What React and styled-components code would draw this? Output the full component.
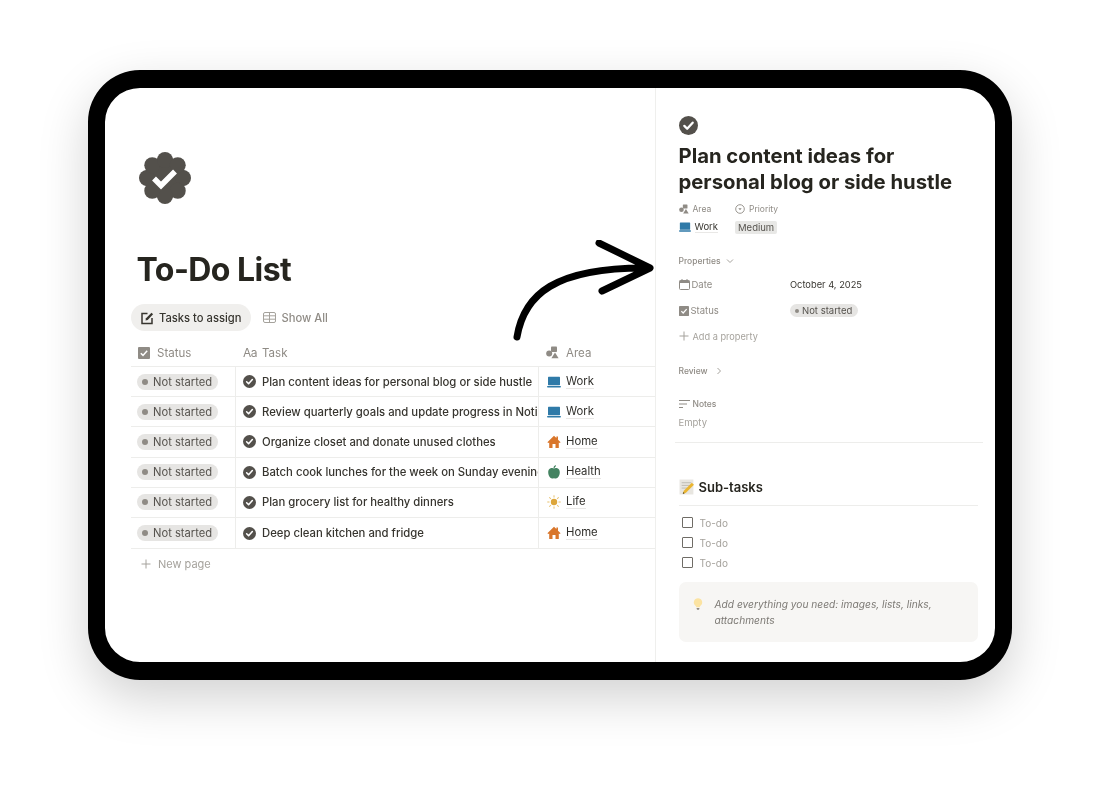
import React from 'react';
import styled, { createGlobalStyle } from 'styled-components';

const GlobalStyle = createGlobalStyle`
  html, body { margin: 0; padding: 0; background: #fff; }
  body { font-family: Inter, "Liberation Sans", sans-serif; color: #37352f; }
  * { box-sizing: border-box; }
`;

const tasks = [
  { name: 'Plan content ideas for personal blog or side hustle', area: 'Work', icon: 'laptop' },
  { name: 'Review quarterly goals and update progress in Notion', area: 'Work', icon: 'laptop' },
  { name: 'Organize closet and donate unused clothes', area: 'Home', icon: 'house' },
  { name: 'Batch cook lunches for the week on Sunday evening', area: 'Health', icon: 'apple' },
  { name: 'Plan grocery list for healthy dinners', area: 'Life', icon: 'sun' },
  { name: 'Deep clean kitchen and fridge', area: 'Home', icon: 'house' },
];

function CheckCircle({ size = 13 }) {
  return (
    <svg width={size} height={size} viewBox="0 0 20 20" style={{ flexShrink: 0 }}>
      <circle cx="10" cy="10" r="10" fill="#53504b" />
      <path d="M5.6 10.4l3 3 5.8-6.4" fill="none" stroke="#fff" strokeWidth="2.4" strokeLinecap="round" strokeLinejoin="round" />
    </svg>
  );
}

function Badge() {
  const petals = [0, 45, 90, 135, 180, 225, 270, 315];
  return (
    <svg width="52" height="52" viewBox="0 0 52 52">
      <circle cx="26" cy="26" r="21" fill="#53504b" />
      {petals.map((a) => (
        <circle
          key={a}
          cx={26 + 18 * Math.cos((a * Math.PI) / 180)}
          cy={26 + 18 * Math.sin((a * Math.PI) / 180)}
          r="8"
          fill="#53504b"
        />
      ))}
      <path d="M15 26.500l7 7L36 19.500" fill="none" stroke="#fff" strokeWidth="5.500" strokeLinejoin="miter" />
    </svg>
  );
}

function Laptop({ size = 14 }) {
  return (
    <svg width={size} height={size} viewBox="0 0 14 14">
      <rect x="1" y="1.800" width="12" height="8.400" rx="0.600" fill="#2f7aa8" />
      <rect x="0" y="10.900" width="14" height="1.700" rx="0.800" fill="#2f7aa8" />
    </svg>
  );
}

function House() {
  return (
    <svg width="14" height="14" viewBox="0 0 14 14">
      <path d="M7 .8L.4 7.200l.9.9L2.200 7.400V13h3.300V9h3v4h3.300V7.400l.9.7.9-.9L11 4.700V1.500H9.400v1.600z" fill="#d9762b" />
    </svg>
  );
}

function Apple() {
  return (
    <svg width="14" height="14" viewBox="0 0 14 14">
      <path d="M7 3.400C5.400 2.400 1.200 2.600 1.200 7.300c0 3.400 2.200 6.200 3.800 6.200.8 0 1.200-.3 2-.3s1.200.3 2 .3c1.600 0 3.800-2.800 3.800-6.200C12.800 2.600 8.600 2.400 7 3.400z" fill="#448361" />
      <path d="M7 3.200C7 2 7.600 1 8.800.6" fill="none" stroke="#448361" strokeWidth="1.200" />
    </svg>
  );
}

function Sun() {
  const rays = [0, 45, 90, 135, 180, 225, 270, 315];
  return (
    <svg width="14" height="14" viewBox="0 0 14 14">
      <circle cx="7" cy="7" r="3.200" fill="#dda63b" />
      {rays.map((a) => (
        <line key={a} x1="7" y1="2.500" x2="7" y2="0.300" stroke="#e8c06a" strokeWidth="1" transform={`rotate(${a} 7 7)`} />
      ))}
    </svg>
  );
}

const areaIcons = { laptop: Laptop, house: House, apple: Apple, sun: Sun };

function CheckSquare({ size = 12 }) {
  return (
    <svg width={size} height={size} viewBox="0 0 12 12" style={{ flexShrink: 0 }}>
      <rect width="12" height="12" rx="1" fill="#8f8b85" />
      <path d="M2.800 6.200l2.200 2.200 4.200-4.600" fill="none" stroke="#fff" strokeWidth="1.500" />
    </svg>
  );
}

function Shapes({ size = 13 }) {
  return (
    <svg width={size} height={size} viewBox="0 0 13 13" style={{ flexShrink: 0 }}>
      <rect x="5" y="0.500" width="6" height="5.500" rx="0.800" fill="#8f8b85" />
      <circle cx="3.200" cy="7.500" r="3" fill="#8f8b85" />
      <path d="M9 6.500l3.600 5.800H5.400z" fill="#8f8b85" />
    </svg>
  );
}

const Plus = () => (
  <svg width="10" height="10" viewBox="0 0 10 10" style={{ flexShrink: 0 }}>
    <path d="M5 .5v9M.5 5h9" stroke="#a5a29c" strokeWidth="1" />
  </svg>
);

function App() {
  return (
    <Page>
      <GlobalStyle />
      <Frame>
        <LeftPanel>
          <Badge />
          <Title>To-Do List</Title>
          <Tabs>
            <Tab $active>
              <svg width="13" height="14" viewBox="0 0 13 14">
                <path d="M6.500 2.500H1v10h10V7" fill="none" stroke="#37352f" strokeWidth="1.500" />
                <path d="M4.500 9.500l.5-2.300L10.500 1.700l1.600 1.600L6.700 8.900z" fill="#37352f" />
              </svg>
              Tasks to assign
            </Tab>
            <Tab>
              <svg width="13" height="11" viewBox="0 0 13 11">
                <rect x="0.500" y="0.500" width="12" height="10" rx="1.500" fill="none" stroke="#a5a29c" />
                <path d="M.5 3.800h12M.5 7.200h12M6.500 .5v10" stroke="#a5a29c" />
              </svg>
              Show All
            </Tab>
          </Tabs>
          <Table>
            <HeaderRow>
              <HeaderCell><CheckSquare />Status</HeaderCell>
              <HeaderCell $gap={5}><AaMark>Aa</AaMark>Task</HeaderCell>
              <HeaderCell><Shapes />Area</HeaderCell>
            </HeaderRow>
            {tasks.map((task) => {
              const AreaIcon = areaIcons[task.icon];
              return (
                <Row key={task.name}>
                  <StatusCell>
                    <Pill><Dot />Not started</Pill>
                  </StatusCell>
                  <TaskCell>
                    <CheckCircle />
                    <TaskName>{task.name}</TaskName>
                  </TaskCell>
                  <AreaCell>
                    <AreaIcon />
                    <AreaName>{task.area}</AreaName>
                  </AreaCell>
                </Row>
              );
            })}
          </Table>
          <NewPage><Plus />New page</NewPage>
        </LeftPanel>

        <RightPanel>
          <CheckCircle size={19} />
          <PageTitle>Plan content ideas for personal blog or side hustle</PageTitle>
          <Pinned>
            <PinnedCol>
              <PinnedLabel><Shapes size={10} />Area</PinnedLabel>
              <PinnedValue><Laptop size={12} /><AreaSmall>Work</AreaSmall></PinnedValue>
            </PinnedCol>
            <PinnedCol>
              <PinnedLabel>
                <svg width="10" height="10" viewBox="0 0 10 10">
                  <circle cx="5" cy="5" r="4.300" fill="none" stroke="#8f8b85" strokeWidth="0.900" />
                  <path d="M3.300 4.200h3.400L5 6.300z" fill="#8f8b85" />
                </svg>
                Priority
              </PinnedLabel>
              <PinnedValue><Tag>Medium</Tag></PinnedValue>
            </PinnedCol>
          </Pinned>

          <SectionHead>
            Properties
            <svg width="8" height="6" viewBox="0 0 8 6">
              <path d="M1 1.500l3 3 3-3" fill="none" stroke="#a5a29c" />
            </svg>
          </SectionHead>
          <PropRows>
            <PropRow>
              <PropLabel>
                <svg width="11" height="11" viewBox="0 0 11 11">
                  <rect x="0.500" y="1.500" width="10" height="9" rx="1" fill="none" stroke="#8f8b85" />
                  <rect x="0.500" y="1.500" width="10" height="2.500" fill="#8f8b85" />
                  <path d="M3 0v2M8 0v2" stroke="#8f8b85" />
                </svg>
                Date
              </PropLabel>
              <PropValue>October 4, 2025</PropValue>
            </PropRow>
            <PropRow>
              <PropLabel><CheckSquare size={10} />Status</PropLabel>
              <SmallPill><SmallDot />Not started</SmallPill>
            </PropRow>
          </PropRows>
          <AddProp><Plus />Add a property</AddProp>

          <ReviewHead>
            Review
            <svg width="6" height="8" viewBox="0 0 6 8">
              <path d="M1.500 1l3 3-3 3" fill="none" stroke="#a5a29c" />
            </svg>
          </ReviewHead>

          <NotesHead>
            <svg width="11" height="8" viewBox="0 0 11 8">
              <path d="M0 .5h11M0 4h8M0 7.500h4" stroke="#8f8b85" />
            </svg>
            Notes
          </NotesHead>
          <EmptyText>Empty</EmptyText>
          <Divider />

          <SubHead>
            <svg width="16" height="16" viewBox="0 0 15 15">
              <rect x="0.500" y="0.500" width="13" height="14" fill="#e8e6e0" />
              <path d="M2.500 3.500h9M2.500 6h9M2.500 8.500h5" stroke="#b9b5ac" strokeWidth="0.800" />
              <path d="M3.500 14l1-3 7.500-7.500 2 2L6.500 13z" fill="#eab530" />
              <path d="M3.500 14l.6-1.800 1.200 1.200z" fill="#5a4a2a" />
            </svg>
            Sub-tasks
          </SubHead>
          <Todos>
            {[0, 1, 2].map((i) => (
              <Todo key={i}><Box />To-do</Todo>
            ))}
          </Todos>
          <Callout>
            <svg width="10" height="14" viewBox="0 0 12 15" style={{ flexShrink: 0, marginTop: 1 }}>
              <path d="M6 .5a5 5 0 0 0-3 9c.6.5.8 1.200.9 1.800h4.200c.1-.6.3-1.300.9-1.800a5 5 0 0 0-3-9z" fill="#fbe3a2" />
              <path d="M4.200 12.300h3.600l-.6 2h-2.400z" fill="#8f8b85" />
            </svg>
            <CalloutText>Add everything you need: images, lists, links, attachments</CalloutText>
          </Callout>
        </RightPanel>

        <Arrow width="150" height="110" viewBox="0 0 150 110">
          <path
            d="M8 97C15 55 45 27 140 28M90 3L141 28 93 51"
            fill="none"
            stroke="#000"
            strokeWidth="7"
            strokeLinecap="round"
            strokeLinejoin="round"
          />
        </Arrow>
      </Frame>
    </Page>
  );
}

const Page = styled.div`
  width: 1100px;
  height: 786px;
  padding: 70px 88px 0;
  overflow: hidden;
`;

const Frame = styled.div`
  position: relative;
  width: 924px;
  height: 610px;
  display: flex;
  border: solid #000;
  border-width: 18px 17.5px;
  border-radius: 52px;
  background: #fff;
  overflow: hidden;
  box-shadow: 0 18px 50px rgba(0, 0, 0, 0.18);
`;

const Arrow = styled.svg`
  position: absolute;
  left: 403.5px;
  top: 152px;
  filter: blur(0.4px);
`;

const LeftPanel = styled.div`
  width: 551px;
  flex-shrink: 0;
  padding: 64px 0 0 26px;
  border-right: 1px solid #efefed;
  filter: blur(0.35px);
  & > svg { display: block; margin-left: 8px; }
`;

const Title = styled.h1`
  margin: 46px 0 0 5.5px;
  font-size: 32px;
  line-height: 40px;
  font-weight: 700;
  letter-spacing: -0.55px;
  color: #26251f;
`;

const Tabs = styled.div`
  display: flex;
  gap: 2px;
  margin-top: 14px;
`;

const Tab = styled.div`
  display: flex;
  align-items: center;
  gap: 5px;
  height: 27px;
  padding: 0 10px;
  border-radius: 14px;
  font-size: 11.2px;
  font-weight: 500;
  background: ${(p) => (p.$active ? '#f0efed' : 'transparent')};
  color: ${(p) => (p.$active ? '#37352f' : '#8f8b85')};
`;

const Table = styled.div`
  margin-top: 8px;
  border-bottom: 1px solid #ededeb;
`;

const columns = 'grid-template-columns: 105px 303px 1fr;';

const HeaderRow = styled.div`
  display: grid;
  ${columns}
  height: 28px;
  border-bottom: 1px solid #ededeb;
`;

const HeaderCell = styled.div`
  display: flex;
  align-items: center;
  gap: ${(p) => p.$gap || 7}px;
  padding-left: 7px;
  font-size: 11.5px;
  color: #8f8b85;
`;

const AaMark = styled.span`
  font-size: 12px;
  letter-spacing: -0.5px;
`;

const Row = styled.div`
  display: grid;
  ${columns}
  height: 30.2px;
  border-bottom: 1px solid #ededeb;
  &:last-child { border-bottom: 0; }
`;

const StatusCell = styled.div`
  display: flex;
  align-items: center;
  padding-left: 6px;
  border-right: 1px solid #ededeb;
`;

const Pill = styled.span`
  display: inline-flex;
  align-items: center;
  gap: 5px;
  height: 16px;
  padding: 0 6px 0 5px;
  border-radius: 8px;
  background: #e6e5e3;
  font-size: 11.2px;
  font-weight: 400;
  color: #56534e;
  white-space: nowrap;
`;

const Dot = styled.span`
  width: 6px;
  height: 6px;
  border-radius: 50%;
  background: #8f8b85;
`;

const TaskCell = styled.div`
  display: flex;
  align-items: center;
  gap: 6px;
  padding-left: 7px;
  overflow: hidden;
  border-right: 1px solid #ededeb;
`;

const TaskName = styled.span`
  font-size: 11.3px;
  font-weight: 500;
  white-space: nowrap;
  color: #37352f;
`;

const AreaCell = styled.div`
  display: flex;
  align-items: center;
  gap: 5px;
  padding-left: 8px;
`;

const AreaName = styled.span`
  font-size: 11.3px;
  font-weight: 400;
  color: #2f2e2a;
  border-bottom: 1px solid #e9e8e6;
  line-height: 13px;
`;

const NewPage = styled.div`
  display: flex;
  align-items: center;
  gap: 7px;
  margin-top: 8px;
  padding-left: 10px;
  font-size: 11px;
  color: #a5a29c;
`;

const RightPanel = styled.div`
  flex: 1;
  padding: 28px 18px 0 22.500px;
  filter: blur(0.35px);
  & > svg { display: block; }
`;

const PageTitle = styled.h2`
  margin: 8px 0 0;
  font-size: 20.300px;
  line-height: 26px;
  font-weight: 700;
  color: #26251f;
`;

const Pinned = styled.div`
  display: flex;
  gap: 17px;
  margin-top: 8px;
`;

const PinnedCol = styled.div`
  display: flex;
  flex-direction: column;
  gap: 5px;
`;

const PinnedLabel = styled.div`
  display: flex;
  align-items: center;
  gap: 4px;
  height: 12px;
  font-size: 8.500px;
  color: #8f8b85;
`;

const PinnedValue = styled.div`
  display: flex;
  align-items: center;
  gap: 4px;
  height: 14px;
`;

const AreaSmall = styled.span`
  font-size: 9.500px;
  font-weight: 400;
  color: #37352f;
  border-bottom: 1px solid #e9e8e6;
`;

const Tag = styled.span`
  padding: 1px 3px;
  border-radius: 2px;
  background: #e8e8e6;
  font-size: 9.500px;
  color: #56534e;
`;

const SectionHead = styled.div`
  display: flex;
  align-items: center;
  gap: 5px;
  margin: 21px 0 0;
  height: 12px;
  font-size: 8.500px;
  font-weight: 500;
  color: #8f8b85;
`;

const PropRows = styled.div`
  margin-top: 4.500px;
`;

const PropRow = styled.div`
  display: flex;
  align-items: center;
  height: 26px;
`;

const PropLabel = styled.div`
  display: flex;
  align-items: center;
  gap: 2px;
  width: 111.500px;
  font-size: 9.500px;
  color: #8f8b85;
`;

const PropValue = styled.span`
  font-size: 9.300px;
  color: #37352f;
`;

const SmallPill = styled.span`
  display: inline-flex;
  align-items: center;
  gap: 3px;
  height: 13px;
  padding: 0 6px 0 5px;
  border-radius: 7px;
  background: #e6e5e3;
  font-size: 9.500px;
  color: #56534e;
`;

const SmallDot = styled.span`
  width: 4px;
  height: 4px;
  border-radius: 50%;
  background: #8f8b85;
`;

const AddProp = styled.div`
  display: flex;
  align-items: center;
  gap: 4px;
  margin-top: 6px;
  height: 13px;
  font-size: 9.200px;
  color: #a5a29c;
`;

const ReviewHead = styled(SectionHead)`
  margin-top: 22px;
  gap: 8px;
`;

const NotesHead = styled.div`
  display: flex;
  align-items: center;
  gap: 3px;
  margin-top: 21px;
  height: 12px;
  font-size: 8.500px;
  font-weight: 500;
  color: #8f8b85;
`;

const EmptyText = styled.div`
  margin-top: 7px;
  font-size: 9.500px;
  line-height: 12px;
  color: #a5a29c;
`;

const Divider = styled.div`
  height: 1px;
  margin: 13px -5px 0 -4px;
  background: #ededeb;
`;

const SubHead = styled.div`
  display: flex;
  align-items: center;
  gap: 4px;
  height: 32px;
  margin-top: 31px;
  padding-bottom: 5px;
  border-bottom: 1px solid #ededeb;
  font-size: 13px;
  font-weight: 600;
  color: #26251f;
`;

const Todos = styled.div`
  display: flex;
  flex-direction: column;
  margin-top: 7px;
`;

const Todo = styled.div`
  display: flex;
  align-items: center;
  gap: 7px;
  height: 20px;
  padding-left: 3px;
  font-size: 10px;
  color: #a5a29c;
`;

const Box = styled.span`
  width: 11px;
  height: 11px;
  border: 1px solid #6f6c66;
  border-radius: 1px;
`;

const Callout = styled.div`
  display: flex;
  gap: 12px;
  width: 299px;
  height: 60px;
  margin-top: 9px;
  padding: 14px 14px 0;
  border-radius: 7px;
  background: #f7f6f4;
`;

const CalloutText = styled.div`
  font-size: 10.200px;
  line-height: 16px;
  font-style: italic;
  color: #7d7a75;
`;

export default App;
